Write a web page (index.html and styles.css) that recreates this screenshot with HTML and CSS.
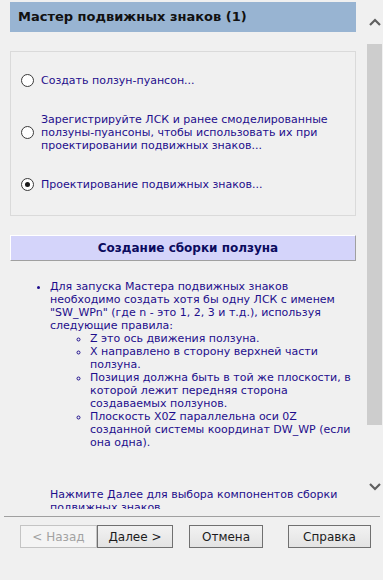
FILE: index.html
```html
<!DOCTYPE html>
<html>
<head>
    <meta name="viewport" content="width=device-width, initial-scale=1.0">
    <title>Мастер подвижных знаков</title>
    <link rel="stylesheet" href="styles.css">
</head>
<body>
<div class="wizard">
    <div class="pane">
        <div class="page">
            <div class="title">Мастер подвижных знаков (1)</div>

            <!-- choice of step -->
            <div class="options">
                <label class="opt">
                    <span class="radio"></span>
                    <span class="opt-text">Создать ползун-пуансон...</span>
                </label>
                <label class="opt">
                    <span class="radio"></span>
                    <span class="opt-text">Зарегистрируйте ЛСК и ранее смоделированные ползуны-пуансоны, чтобы использовать их при проектировании подвижных знаков...</span>
                </label>
                <label class="opt">
                    <span class="radio checked"></span>
                    <span class="opt-text">Проектирование подвижных знаков...</span>
                </label>
            </div>

            <div class="section">Создание сборки ползуна</div>

            <ul class="rules">
                <li>Для запуска Мастера подвижных знаков необходимо создать хотя бы одну ЛСК с именем "SW_WPn" (где n - это 1, 2, 3 и т.д.), используя следующие правила:
                    <ul>
                        <li>Z это ось движения ползуна.</li>
                        <li>X направлено в сторону верхней части ползуна.</li>
                        <li>Позиция должна быть в той же плоскости, в которой лежит передняя сторона создаваемых ползунов.</li>
                        <li>Плоскость X0Z параллельна оси 0Z созданной системы координат DW_WP (если она одна).</li>
                    </ul>
                </li>
            </ul>

            <p class="hint">Нажмите Далее для выбора компонентов сборки подвижных знаков.</p>
        </div>

        <div class="scrollbar">
            <svg class="arrow up" width="12" height="8" viewBox="0 0 12 8"><path d="M1 7 L6 2 L11 7" fill="none" stroke="#606060" stroke-width="2.2"/></svg>
            <div class="thumb"></div>
            <svg class="arrow down" width="12" height="8" viewBox="0 0 12 8"><path d="M1 1 L6 6 L11 1" fill="none" stroke="#606060" stroke-width="2.2"/></svg>
        </div>
    </div>

    <div class="footer">
        <div class="buttons">
            <span class="pair">
                <button class="btn back" disabled>&lt; Назад</button><button class="btn next">Далее &gt;</button>
            </span>
            <button class="btn cancel">Отмена</button>
            <button class="btn help">Справка</button>
        </div>
    </div>
</div>
</body>
</html>
```
FILE: styles.css
```css
body {
    margin: 0;
    background-color: #f0f0f0;
    font-family: "DejaVu Sans", Verdana, sans-serif;
}

.wizard {
    width: 383px;
    height: 580px;
    display: flex;
    flex-direction: column;
}

.pane {
    height: 509px;
    display: flex;
    overflow: hidden;
}

.page {
    flex: none;
    width: 346px;
    padding: 2px 10px 0 10px;
}

.title {
    height: 30px;
    line-height: 30px;
    padding-left: 8px;
    background-color: #98b4d2;
    color: #111111;
    font-weight: bold;
    font-size: 13px;
}

.options {
    margin-top: 19px;
    border: 1px solid #dadada;
    padding: 22px 10px 24px 10px;
    display: flex;
    flex-direction: column;
    gap: 26px;
}

.opt {
    display: flex;
    align-items: center;
    gap: 7px;
}

.opt-text {
    font-size: 11px;
    line-height: 13px;
    color: #1e0e8c;
}

.radio {
    flex: none;
    width: 11px;
    height: 11px;
    border: 1px solid #3a3a3a;
    border-radius: 50%;
    background-color: #ffffff;
    position: relative;
}

.radio.checked::after {
    content: "";
    position: absolute;
    left: 3px;
    top: 3px;
    width: 5px;
    height: 5px;
    border-radius: 50%;
    background-color: #1a1a1a;
}

.section {
    margin-top: 19px;
    height: 24px;
    line-height: 24px;
    padding-left: 10px;
    text-align: center;
    background-color: #d4d4fa;
    border-top: 1px solid #ffffff;
    border-left: 1px solid #ffffff;
    border-right: 1px solid #a0a0a0;
    border-bottom: 1px solid #a0a0a0;
    color: #0b0b5e;
    font-weight: bold;
    font-size: 12px;
}

.rules {
    margin: 19px 0 0 0;
    padding-left: 40px;
    font-size: 11px;
    line-height: 13px;
    color: #1e0e8c;
}

.rules ul {
    margin: 0;
    padding-left: 40px;
    list-style: circle;
}

.hint {
    margin: 39px 0 0 40px;
    font-size: 11px;
    line-height: 13px;
    color: #1e0e8c;
}

.scrollbar {
    flex: none;
    width: 17px;
    display: flex;
    flex-direction: column;
    align-items: center;
}

.arrow.up {
    margin-top: 18px;
}

.thumb {
    margin-top: 18px;
    width: 15px;
    height: 381px;
    background-color: #cdcdcd;
}

.arrow.down {
    margin-top: 58px;
}

.footer {
    padding-top: 7px;
}

.buttons {
    border-top: 1px solid #a0a0a0;
    margin: 0 3px 0 4px;
    padding: 8px 0 0 16px;
    display: flex;
}

.btn {
    height: 23px;
    padding: 0;
    border: 1px solid #707070;
    background: linear-gradient(#f2f2f2, #e3e3e3);
    font-family: "DejaVu Sans", Tahoma, sans-serif;
    font-size: 12px;
    color: #1c1c1c;
}

.btn.back {
    width: 77px;
    border-color: #c4c4c4;
    background: #f4f4f4;
    color: #a2a2a2;
}

.btn.next {
    width: 76px;
}

.btn.cancel {
    width: 74px;
    margin-left: 16px;
}

.btn.help {
    width: 83px;
    margin-left: 25px;
}
```
